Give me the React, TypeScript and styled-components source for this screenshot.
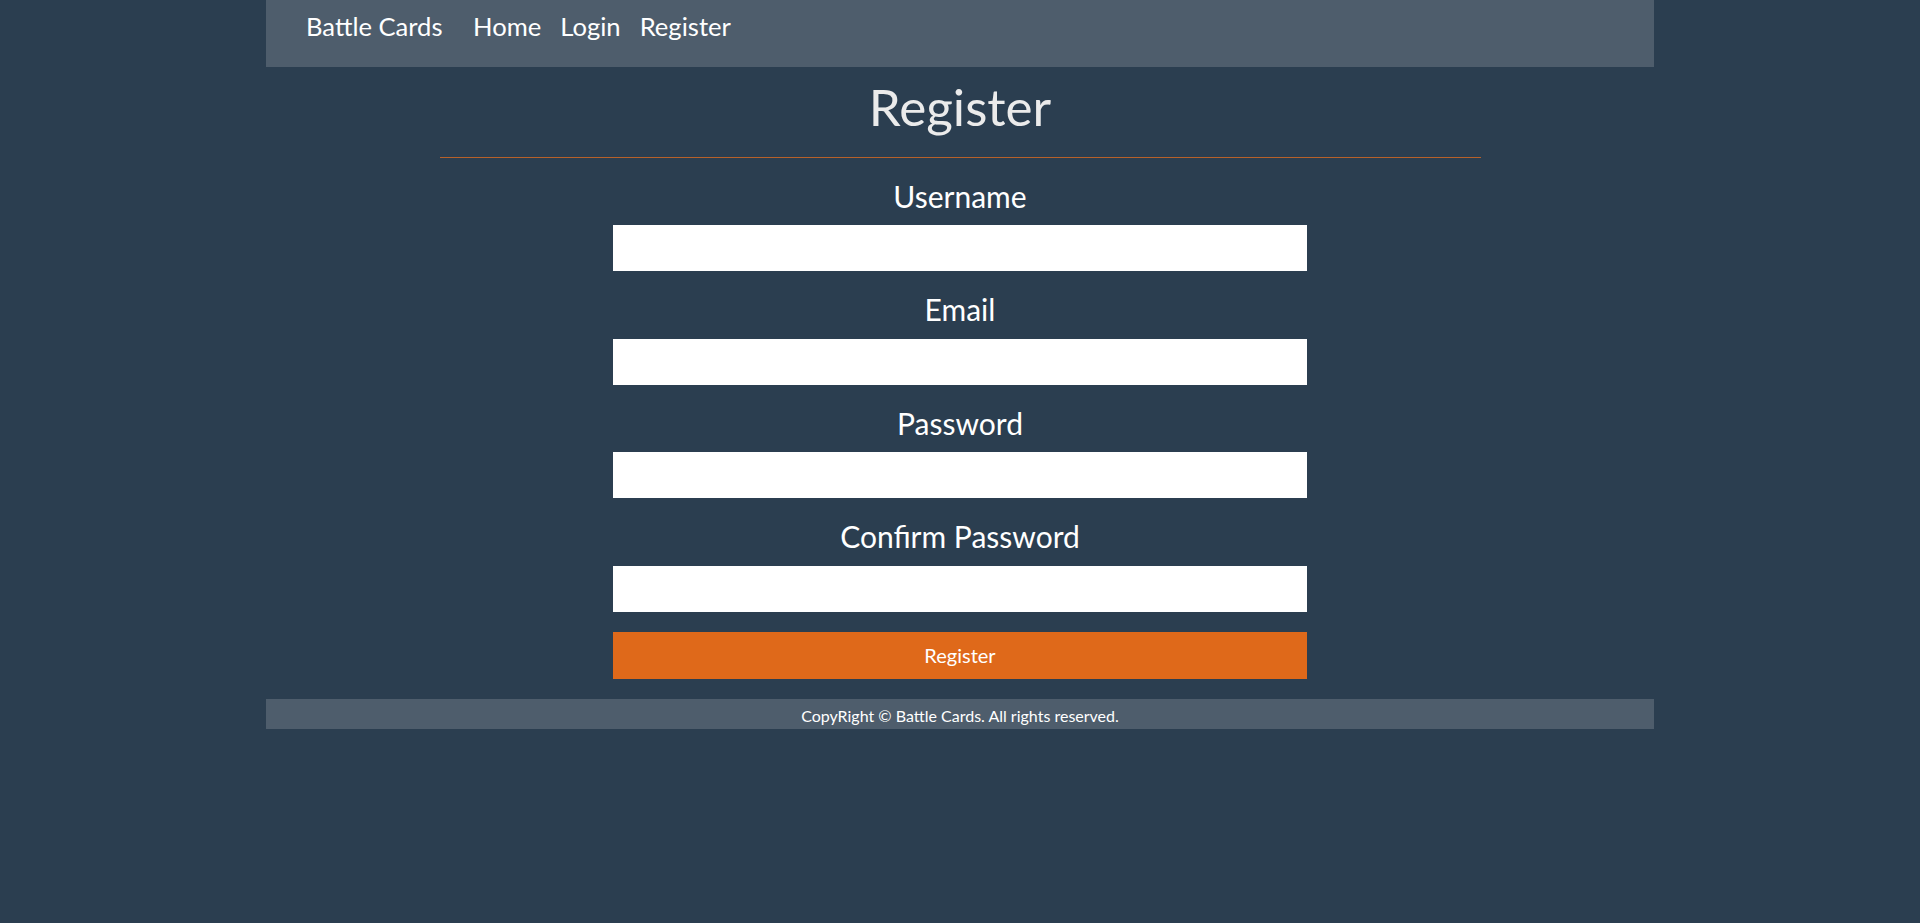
import React from "react";
import styled, { createGlobalStyle } from "styled-components";

const Global = createGlobalStyle`
  html, body {
    margin: 0;
    padding: 0;
    background: #2b3e50;
  }
  body {
    font-family: Lato, "Open Sans", "Liberation Sans", sans-serif;
    color: #ebebeb;
  }
  * { box-sizing: border-box; }
`;

const Page = styled.div`
  width: 1388px;
  margin: 0 auto;
`;

const NavBar = styled.nav`
  height: 67px;
  background: #4e5d6c;
  display: flex;
  align-items: flex-start;
  padding: 10.7px 0 0 40px;
`;

const Brand = styled.a`
  font-size: 25.6px;
  line-height: 30.72px;
  color: #ffffff;
  text-decoration: none;
  margin-right: 30.5px;
`;

const NavLinks = styled.div`
  display: flex;
  gap: 19px;
`;

const NavLink = styled.a`
  font-size: 25.6px;
  line-height: 30.72px;
  color: #ffffff;
  text-decoration: none;
`;

const Main = styled.main`
  display: flex;
  flex-direction: column;
  align-items: center;
  padding-bottom: 20px;
`;

const Title = styled.h1`
  margin: 8.5px 0 0;
  font-size: 51.2px;
  line-height: 61.44px;
  font-weight: 400;
  color: #ebebeb;
  text-align: center;
`;

const Rule = styled.hr`
  width: 75%;
  height: 1px;
  margin: 20.1px 0 0;
  border: none;
  background: #b7612a;
`;

const Form = styled.form`
  width: 50%;
  margin-top: 19.7px;
  display: flex;
  flex-direction: column;
  gap: 19.9px;
`;

const Field = styled.div`
  display: flex;
  flex-direction: column;
  align-items: center;
`;

const Label = styled.label`
  font-size: 30px;
  line-height: 36px;
  color: #ffffff;
  margin-bottom: 11.6px;
`;

const Input = styled.input`
  width: 100%;
  height: 46px;
  border: none;
  background: #ffffff;
  padding: 0 12px;
  font-family: inherit;
  font-size: 16px;
  outline: none;
`;

const Submit = styled.button`
  width: 100%;
  height: 47px;
  margin-top: 0.3px;
  border: none;
  background: #df691a;
  color: #ffffff;
  font-family: inherit;
  font-size: 20px;
  cursor: pointer;
`;

const Footer = styled.footer`
  height: 30px;
  background: #4e5d6c;
  padding-top: 7px;
  text-align: center;
  font-size: 16px;
  line-height: 19.2px;
  color: #ffffff;
`;

const fields = [
  { id: "username", label: "Username", type: "text" },
  { id: "email", label: "Email", type: "email" },
  { id: "password", label: "Password", type: "password" },
  { id: "confirm", label: "Confirm Password", type: "password" },
];

export default function App() {
  return (
    <>
      <Global />
      <Page>
        <NavBar>
          <Brand href="#">Battle Cards</Brand>
          <NavLinks>
            <NavLink href="#">Home</NavLink>
            <NavLink href="#">Login</NavLink>
            <NavLink href="#">Register</NavLink>
          </NavLinks>
        </NavBar>
        <Main>
          <Title>Register</Title>
          <Rule />
          <Form onSubmit={(e) => e.preventDefault()}>
            {fields.map((f) => (
              <Field key={f.id}>
                <Label htmlFor={f.id}>{f.label}</Label>
                <Input id={f.id} type={f.type} />
              </Field>
            ))}
            <Submit type="submit">Register</Submit>
          </Form>
        </Main>
        <Footer>CopyRight © Battle Cards. All rights reserved.</Footer>
      </Page>
    </>
  );
}
